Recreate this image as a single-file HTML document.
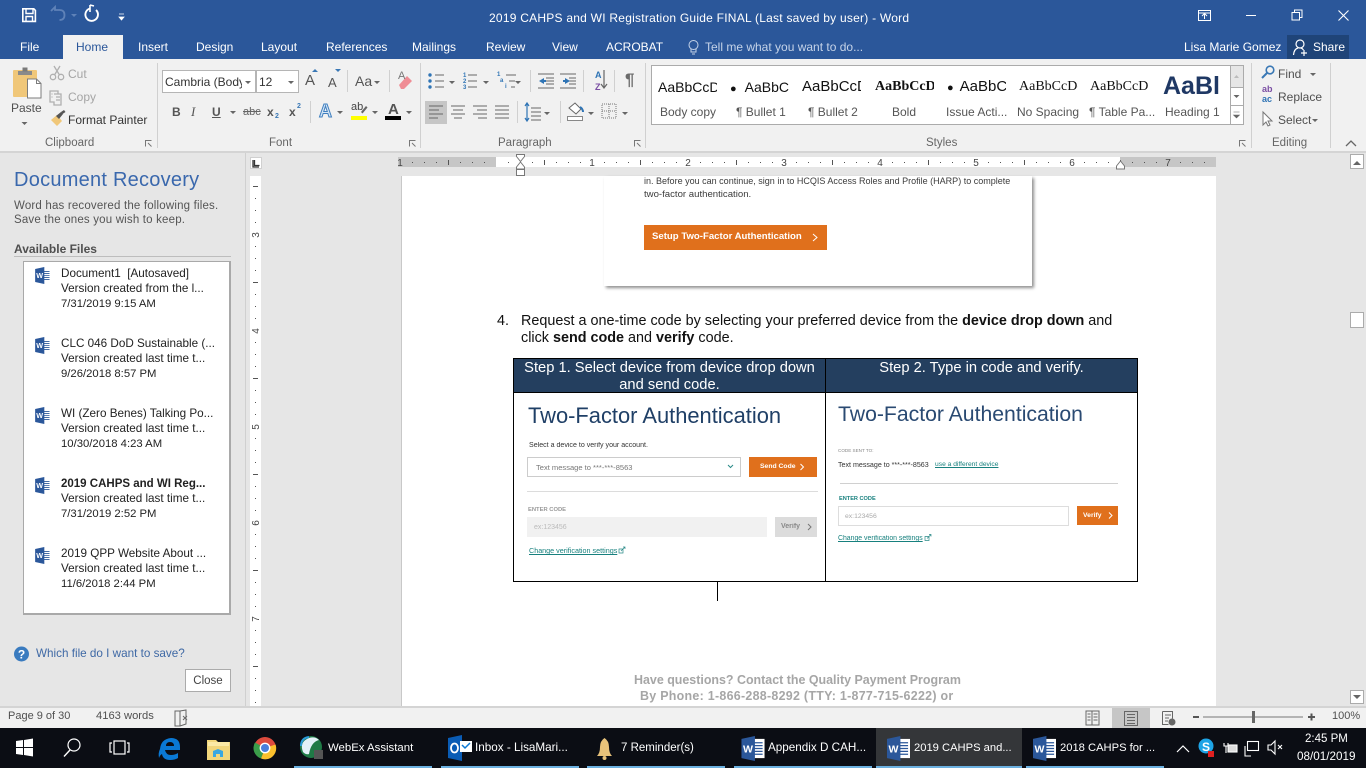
<!DOCTYPE html>
<html lang="en"><head><meta charset="utf-8"><title>Word</title>
<style>
html,body{margin:0;padding:0;width:1366px;height:768px;overflow:hidden;background:#e6e6e6}
body{position:relative;font-family:"Liberation Sans",sans-serif;font-size:12px;color:#444}
.b{position:absolute}
.t{position:absolute;white-space:nowrap;line-height:16px}
.w{color:#fff}
.g{color:#505050}
.s{position:absolute;overflow:hidden;white-space:nowrap;line-height:24px;color:#111;top:75px;height:24px;font-size:14px;text-align:left}
.l{position:absolute;white-space:nowrap;line-height:16px;top:104px;font-size:12px;color:#555;text-align:center}
.f{font-size:11.7px;color:#222;left:61px}
.d{font-size:11.3px}
.k{font-size:11.6px}
.i{position:absolute;white-space:nowrap;line-height:12px}
svg.o{position:absolute;left:0;top:0;pointer-events:none}
.blur{filter:blur(.3px)}
</style></head><body>
<!-- title bar -->
<div class="b" style="left:0;top:0;width:1366px;height:59px;background:#2b579a"></div>
<div class="b" style="left:63px;top:35px;width:60px;height:24px;background:#f1f1f1"></div>
<div class="b" style="left:1287px;top:35px;width:62px;height:24px;background:#1f4478"></div>
<div class="t w" style="left:489px;top:10px;letter-spacing:.02em">2019 CAHPS and WI Registration Guide FINAL (Last saved by user) - Word</div>
<div class="t w" style="left:20px;top:39px">File</div>
<div class="t" style="left:76px;top:39px;color:#2b579a">Home</div>
<div class="t w" style="left:138px;top:39px">Insert</div>
<div class="t w" style="left:196px;top:39px">Design</div>
<div class="t w" style="left:261px;top:39px">Layout</div>
<div class="t w" style="left:326px;top:39px">References</div>
<div class="t w" style="left:412px;top:39px">Mailings</div>
<div class="t w" style="left:486px;top:39px">Review</div>
<div class="t w" style="left:552px;top:39px">View</div>
<div class="t w" style="left:606px;top:39px">ACROBAT</div>
<div class="t" style="left:705px;top:39px;color:#c5d3e8">Tell me what you want to do...</div>
<div class="t w" style="left:1184px;top:39px">Lisa Marie Gomez</div>
<div class="t w" style="left:1313px;top:39px">Share</div>
<!-- ribbon -->
<div class="b" style="left:0;top:59px;width:1366px;height:92px;background:#f1f1f1;border-bottom:2px solid #d4d4d4"></div>
<div class="t g" style="left:11px;top:100px">Paste</div>
<div class="t" style="left:68px;top:66px;color:#a5a5a5">Cut</div>
<div class="t" style="left:68px;top:89px;color:#a5a5a5">Copy</div>
<div class="t" style="left:68px;top:112px;color:#333">Format Painter</div>
<div class="t" style="left:45px;top:135px;color:#666;font-size:11.5px">Clipboard</div>
<div class="t" style="left:269px;top:135px;color:#666;font-size:11.5px">Font</div>
<div class="t" style="left:498px;top:135px;color:#666;font-size:11.5px">Paragraph</div>
<div class="t" style="left:926px;top:135px;color:#666;font-size:11.5px">Styles</div>
<div class="t" style="left:1272px;top:135px;color:#666;font-size:11.5px">Editing</div>
<div class="b" style="left:162px;top:70px;width:92px;height:21px;background:#fff;border:1px solid #b5b5b5"></div>
<div class="b" style="left:256px;top:70px;width:41px;height:21px;background:#fff;border:1px solid #b5b5b5"></div>
<div class="b" style="left:165px;top:74px;width:77px;height:16px;overflow:hidden;white-space:nowrap;line-height:16px;color:#333">Cambria (Body)</div>
<div class="t" style="left:259px;top:74px;color:#333">12</div>
<div class="t" style="left:172px;top:104px;font-weight:bold;color:#555">B</div>
<div class="t" style="left:191px;top:104px;font-style:italic;font-family:'Liberation Serif',serif;font-size:13px;color:#555">I</div>
<div class="t" style="left:212px;top:104px;font-weight:bold;text-decoration:underline;color:#555">U</div>
<div class="t" style="left:243px;top:104px;color:#666;font-size:11px;text-decoration:line-through">abc</div>
<div class="t" style="left:267px;top:104px;font-weight:bold;color:#555">x</div>
<div class="t" style="left:275px;top:109px;font-size:7px;color:#3a78b5;font-weight:bold">2</div>
<div class="t" style="left:289px;top:104px;font-weight:bold;color:#555">x</div>
<div class="t" style="left:297px;top:99px;font-size:7px;color:#3a78b5;font-weight:bold">2</div>
<div class="t" style="left:305px;top:73px;font-size:15px;color:#555">A</div>
<div class="t" style="left:328px;top:75px;font-size:13px;color:#555">A</div>
<div class="t" style="left:355px;top:73px;font-size:14px;color:#555">Aa</div>
<div class="t" style="left:319px;top:103px;font-size:18px;font-weight:bold;color:#d5e5f5;-webkit-text-stroke:1px #3f7fbf">A</div>
<div class="t" style="left:351px;top:99px;font-size:11px;color:#444">ab</div>
<div class="t" style="left:388px;top:102px;font-size:15px;font-weight:bold;color:#555">A</div>
<div class="t" style="left:625px;top:72px;font-size:17px;font-weight:bold;color:#6b6b6b">¶</div>
<div class="t" style="left:595px;top:70px;font-size:9px;font-weight:bold;color:#2f74b5;line-height:11px">A</div>
<div class="t" style="left:595px;top:82px;font-size:9px;font-weight:bold;color:#7a4ea3;line-height:11px">Z</div>
<!-- gallery -->
<div class="b" style="left:651px;top:65px;width:591px;height:58px;background:#fff;border:1px solid #ababab"></div>
<div class="s" style="left:658px;width:59px">AaBbCcDc</div>
<div class="s" style="left:730px;width:60px"><span style="font-size:11px;margin-right:8px">●</span>AaBbC</div>
<div class="s" style="left:802px;width:59px;font-size:15px">AaBbCcDc</div>
<div class="s" style="left:875px;width:59px;font-family:'Liberation Serif',serif;font-weight:bold;font-size:14px">AaBbCcDc</div>
<div class="s" style="left:947px;width:59px;font-size:15px"><span style="font-size:11px;margin-right:6px">●</span>AaBbCc</div>
<div class="s" style="left:1019px;width:59px;font-family:'Liberation Serif',serif;font-size:14px">AaBbCcDc</div>
<div class="s" style="left:1090px;width:59px;font-family:'Liberation Serif',serif;font-size:14px">AaBbCcD</div>
<div class="s" style="left:1163px;width:57px;font-size:25px;font-weight:bold;color:#1f3864;top:72px;height:30px;line-height:28px">AaBl</div>
<div class="l" style="left:660px">Body copy</div>
<div class="l" style="left:736px">¶ Bullet 1</div>
<div class="l" style="left:808px">¶ Bullet 2</div>
<div class="l" style="left:892px">Bold</div>
<div class="l" style="left:946px">Issue Acti...</div>
<div class="l" style="left:1017px">No Spacing</div>
<div class="l" style="left:1089px">¶ Table Pa...</div>
<div class="l" style="left:1165px">Heading 1</div>
<div class="b" style="left:1230px;top:66px;width:13px;height:21px;background:#e6e6e6"></div>
<div class="b" style="left:1230px;top:87px;width:13px;height:1px;background:#ababab"></div>
<div class="b" style="left:1230px;top:105px;width:13px;height:1px;background:#ababab"></div>
<div class="b" style="left:1230px;top:66px;width:1px;height:58px;background:#ababab"></div>
<div class="t g" style="left:1278px;top:66px">Find</div>
<div class="t g" style="left:1278px;top:89px">Replace</div>
<div class="t g" style="left:1278px;top:112px">Select</div>
<div class="t" style="left:1262px;top:84px;font-size:9px;line-height:10px;color:#7a4ea3;font-weight:bold">ab</div>
<div class="t" style="left:1262px;top:94px;font-size:9px;line-height:10px;color:#2f74b5;font-weight:bold">ac</div>
<!-- left panel -->
<div class="b" style="left:0;top:153px;width:245px;height:553px;background:#e6e6e6;border-right:1px solid #d0d0d0"></div>
<div class="t" style="left:14px;top:169px;font-size:20px;line-height:22px;color:#3a68ad;letter-spacing:.25px">Document Recovery</div>
<div class="t" style="left:14px;top:198px;font-size:11.5px;color:#555;letter-spacing:.18px">Word has recovered the following files.</div>
<div class="t" style="left:14px;top:212px;font-size:11.5px;color:#555;letter-spacing:.18px">Save the ones you wish to keep.</div>
<div class="t" style="left:14px;top:241px;font-weight:bold;color:#4f4f4f;font-size:12px">Available Files</div>
<div class="b" style="left:14px;top:256px;width:217px;height:1px;background:#bdbdbd"></div>
<div class="b" style="left:23px;top:261px;width:205px;height:351px;background:#fff;border:2px solid #a9a9a9;border-width:1px 2px 2px 1px"></div>
<div class="t f" style="top:266px">Document1&nbsp; [Autosaved]</div>
<div class="t f" style="top:281px">Version created from the l...</div>
<div class="t f d" style="top:296px">7/31/2019 9:15 AM</div>
<div class="t f" style="top:336px">CLC 046 DoD Sustainable (...</div>
<div class="t f" style="top:351px">Version created last time t...</div>
<div class="t f d" style="top:366px">9/26/2018 8:57 PM</div>
<div class="t f" style="top:406px">WI (Zero Benes) Talking Po...</div>
<div class="t f" style="top:421px">Version created last time t...</div>
<div class="t f d" style="top:436px">10/30/2018 4:23 AM</div>
<div class="t f" style="top:476px;font-weight:bold;font-size:11.5px">2019 CAHPS and WI Reg...</div>
<div class="t f" style="top:491px">Version created last time t...</div>
<div class="t f d" style="top:506px">7/31/2019 2:52 PM</div>
<div class="t f" style="top:546px">2019 QPP Website About ... </div>
<div class="t f" style="top:561px">Version created last time t...</div>
<div class="t f d" style="top:576px">11/6/2018 2:44 PM</div>
<div class="t" style="left:36px;top:646px;color:#3f69a5;font-size:11.7px">Which file do I want to save?</div>
<div class="b" style="left:185px;top:669px;width:44px;height:21px;background:#fff;border:1px solid #ababab;text-align:center;line-height:22px;color:#444;font-size:11.5px">Close</div>
<!-- ruler bg -->
<div class="b" style="left:398px;top:157px;width:818px;height:10px;background:#fff"></div>
<div class="b" style="left:398px;top:157px;width:98px;height:10px;background:#c6c6c6"></div>
<div class="b" style="left:1120px;top:157px;width:96px;height:10px;background:#c6c6c6"></div>
<div class="b" style="left:250px;top:176px;width:11px;height:530px;background:#fff"></div>
<div class="b" style="left:250px;top:157px;width:12px;height:12px;background:#fff;border:1px solid #d0d0d0;box-sizing:border-box"></div>
<!-- page -->
<div class="b" style="left:401px;top:176px;width:815px;height:530px;background:#fff;border-left:1px solid #c8c8c8;box-sizing:border-box"></div>
<div class="b" style="left:604px;top:176px;width:428px;height:110px;background:#fff;box-shadow:2px 2px 3px #8f8f8f"></div>
<div class="i blur" style="left:644px;top:175px;font-size:9.03px;color:#3c3c3c">in. Before you can continue, sign in to HCQIS Access Roles and Profile (HARP) to complete</div>
<div class="i blur" style="left:644px;top:189px;font-size:9.6px;color:#3c3c3c">two-factor authentication.</div>
<div class="b" style="left:644px;top:225px;width:183px;height:25px;background:#e0701c"></div>
<div class="i blur" style="left:652px;top:231px;font-size:9.6px;font-weight:bold;color:#fff">Setup Two-Factor Authentication</div>
<div class="t" style="left:497px;top:313px;font-size:14.39px;color:#111">4.</div>
<div class="t" style="left:521px;top:313px;font-size:14.39px;color:#111">Request a one-time code by selecting your preferred device from the <b>device drop down</b> and</div>
<div class="t" style="left:521px;top:330px;font-size:14.39px;color:#111">click <b>send code</b> and <b>verify</b> code.</div>
<!-- table -->
<div class="b" style="left:513px;top:358px;width:625px;height:224px;background:#fff;border:1px solid #000;box-sizing:border-box"></div>
<div class="b" style="left:514px;top:359px;width:623px;height:33px;background:#243f5f"></div>
<div class="b" style="left:513px;top:392px;width:625px;height:1px;background:#000"></div>
<div class="b" style="left:825px;top:358px;width:1px;height:224px;background:#000"></div>
<div class="b" style="left:717px;top:582px;width:1px;height:19px;background:#000"></div>
<div class="t" style="left:514px;width:311px;text-align:center;top:360px;font-size:14.7px;color:#fff">Step 1. Select device from device drop down</div>
<div class="t" style="left:514px;width:311px;text-align:center;top:377px;font-size:14.7px;color:#fff">and send code.</div>
<div class="t" style="left:826px;width:311px;text-align:center;top:360px;font-size:14.7px;color:#fff">Step 2. Type in code and verify.</div>
<!-- left screenshot -->
<div class="i blur" style="left:528px;top:403px;font-size:21.9px;line-height:26px;color:#1f3f66">Two-Factor Authentication</div>
<div class="i blur" style="left:529px;top:440px;font-size:7.07px;color:#333">Select a device to verify your account.</div>
<div class="b" style="left:527px;top:457px;width:212px;height:18px;background:#fff;border:1px solid #ccc"></div>
<div class="i blur" style="left:536px;top:462px;font-size:7.55px;color:#777">Text message to ***-***-8563</div>
<div class="b" style="left:749px;top:457px;width:68px;height:20px;background:#e0701c"></div>
<div class="i blur" style="left:760px;top:461px;font-size:6.8px;font-weight:bold;color:#fff">Send Code</div>
<div class="b" style="left:527px;top:491px;width:291px;height:1px;background:#dcdcdc"></div>
<div class="i blur" style="left:528px;top:504px;font-size:5.8px;font-weight:bold;color:#999">ENTER CODE</div>
<div class="b" style="left:527px;top:517px;width:240px;height:20px;background:#f1f1f1"></div>
<div class="i blur" style="left:534px;top:522px;font-size:7px;color:#bbb">ex:123456</div>
<div class="b" style="left:775px;top:517px;width:42px;height:20px;background:#dcdcdc"></div>
<div class="i blur" style="left:781px;top:521px;font-size:7px;font-weight:bold;color:#888">Verify</div>
<div class="i blur" style="left:529px;top:545px;font-size:7.2px;color:#17807e;text-decoration:underline">Change verification settings</div>
<!-- right screenshot -->
<div class="i blur" style="left:838px;top:402px;font-size:21.2px;line-height:26px;color:#2a4a72">Two-Factor Authentication</div>
<div class="i blur" style="left:838px;top:445px;font-size:4.6px;color:#888">CODE SENT TO:</div>
<div class="i blur" style="left:838px;top:459px;font-size:7.1px;color:#333">Text message to ***-***-8563</div>
<div class="i blur" style="left:935px;top:459px;font-size:6.7px;color:#17807e;text-decoration:underline">use a different device</div>
<div class="b" style="left:840px;top:483px;width:278px;height:1px;background:#d0d0d0"></div>
<div class="i blur" style="left:839px;top:493px;font-size:5.6px;font-weight:bold;color:#17807e">ENTER CODE</div>
<div class="b" style="left:838px;top:506px;width:229px;height:18px;background:#fff;border:1px solid #ddd"></div>
<div class="i blur" style="left:845px;top:511px;font-size:6.8px;color:#aaa">ex:123456</div>
<div class="b" style="left:1077px;top:506px;width:41px;height:19px;background:#e0701c"></div>
<div class="i blur" style="left:1083px;top:510px;font-size:6.8px;font-weight:bold;color:#fff">Verify</div>
<div class="i blur" style="left:838px;top:533px;font-size:6.9px;color:#17807e;text-decoration:underline">Change verification settings</div>
<div class="t" style="left:634px;top:672px;font-size:12.45px;font-weight:bold;color:#a6a6a6">Have questions? Contact the Quality Payment Program</div>
<div class="t" style="left:640px;top:688px;font-size:12.45px;font-weight:bold;color:#a6a6a6;letter-spacing:.28px">By Phone: 1-866-288-8292 (TTY: 1-877-715-6222) or</div>
<!-- scrollbar -->
<div class="b" style="left:1350px;top:153px;width:16px;height:553px;background:#e6e6e6"></div>
<div class="b" style="left:1350px;top:154px;width:14px;height:15px;background:#fff;border:1px solid #ababab;box-sizing:border-box"></div>
<div class="b" style="left:1350px;top:312px;width:14px;height:16px;background:#fff;border:1px solid #ababab;box-sizing:border-box"></div>
<div class="b" style="left:1350px;top:690px;width:14px;height:14px;background:#fff;border:1px solid #ababab;box-sizing:border-box"></div>
<!-- status -->
<div class="b" style="left:0;top:706px;width:1366px;height:22px;background:#f1f1f1;border-top:2px solid #d4d4d4;box-sizing:border-box"></div>
<div class="b" style="left:1112px;top:708px;width:38px;height:20px;background:#c6c6c6"></div>
<div class="t g" style="left:8px;top:708px;font-size:11px">Page 9 of 30</div>
<div class="t g" style="left:96px;top:708px;font-size:11.2px">4163 words</div>
<div class="t g" style="left:1332px;top:708px;font-size:11px">100%</div>
<!-- taskbar -->
<div class="b" style="left:0;top:728px;width:1366px;height:40px;background:#0b0d14"></div>
<div class="b" style="left:876px;top:728px;width:146px;height:40px;background:#343639"></div>
<div class="b" style="left:294px;top:766px;width:138px;height:2px;background:#6bb0e0"></div>
<div class="b" style="left:441px;top:766px;width:138px;height:2px;background:#6bb0e0"></div>
<div class="b" style="left:587px;top:766px;width:138px;height:2px;background:#6bb0e0"></div>
<div class="b" style="left:734px;top:766px;width:138px;height:2px;background:#6bb0e0"></div>
<div class="b" style="left:876px;top:766px;width:146px;height:2px;background:#6bb0e0"></div>
<div class="b" style="left:1026px;top:766px;width:138px;height:2px;background:#6bb0e0"></div>
<div class="t w k" style="left:328px;top:740px;font-size:11.4px">WebEx Assistant</div>
<div class="t w k" style="left:475px;top:740px;font-size:11.7px">Inbox - LisaMari...</div>
<div class="t w k" style="left:621px;top:740px;font-size:11.5px">7 Reminder(s)</div>
<div class="t w k" style="left:768px;top:740px;font-size:11.7px">Appendix D CAH...</div>
<div class="t w k" style="left:914px;top:740px;font-size:11.2px">2019 CAHPS and...</div>
<div class="t w k" style="left:1060px;top:740px;font-size:11.2px">2018 CAHPS for ...</div>
<div class="t w" style="left:1305px;top:731px;font-size:11.5px">2:45 PM</div>
<div class="t w" style="left:1297px;top:749px;font-size:11.7px">08/01/2019</div>

<svg class="o" width="1366" height="768" viewBox="0 0 1366 768" xmlns="http://www.w3.org/2000/svg" font-family="Liberation Sans, sans-serif">
<defs>
<pattern id="hr" x="496" y="157" width="96" height="10" patternUnits="userSpaceOnUse">
<g fill="#555"><rect x="12" y="5" width="1" height="1"/><rect x="24" y="5" width="1" height="1"/><rect x="36" y="5" width="1" height="1"/><rect x="48" y="3" width="1" height="5"/><rect x="60" y="5" width="1" height="1"/><rect x="72" y="5" width="1" height="1"/><rect x="84" y="5" width="1" height="1"/></g>
</pattern>
<pattern id="vr" x="250" y="138" width="11" height="96" patternUnits="userSpaceOnUse">
<g fill="#555"><rect x="5" y="12" width="1" height="1"/><rect x="5" y="24" width="1" height="1"/><rect x="5" y="36" width="1" height="1"/><rect x="3" y="48" width="5" height="1"/><rect x="5" y="60" width="1" height="1"/><rect x="5" y="72" width="1" height="1"/><rect x="5" y="84" width="1" height="1"/></g>
</pattern>
<symbol id="word" viewBox="0 0 24 26" overflow="visible">
<rect x="9" y="3" width="15" height="20" fill="#fff"/>
<g stroke="#2b579a" stroke-width="1.3"><path d="M13 7h9M13 10h9M13 13h9M13 16h9M13 19h9"/></g>
<path d="M0 3 14 0v26L0 23z" fill="#2b579a"/>
<text x="6.8" y="17" font-size="11" font-weight="bold" fill="#fff" text-anchor="middle" font-family="Liberation Sans, sans-serif">W</text>
</symbol>
</defs>
<!-- QAT -->
<g fill="none" stroke="#fff" stroke-width="1.6"><path d="M22.8 8.8h11l1.6 1.6v11H22.8z"/><path d="M26 9v4.5h7V9M26 21.5v-5h6.5v5" stroke-width="1.4"/></g>
<path d="M51 11l4-4v3h4.500q5 0 5 5t-5 5" fill="none" stroke="#5f82b8" stroke-width="1.8"/>
<path d="M71 14l3 3 3-3z" fill="#5f82b8"/>
<path d="M96 10a6.300 6.300 0 1 1-6-1.500" fill="none" stroke="#fff" stroke-width="1.900"/><path d="M90 5v7M90 5l4 1" fill="none" stroke="#fff" stroke-width="1.600"/>
<path d="M119 14h5M119 17l2.500 3 2.500-3z" fill="#fff" stroke="#fff" stroke-width=".8"/>
<!-- window -->
<g fill="none" stroke="#fff" stroke-width="1"><rect x="1198.500" y="10.500" width="12" height="10"/><path d="M1198.500 13h12M1204.500 19v-5M1202 16l2.500-2.500 2.500 2.500"/><path d="M1246 15.500h10"/><rect x="1292" y="12.500" width="7.500" height="7.500"/><path d="M1294.500 12.500v-2.500h7.500v7.500h-2.500"/><path d="M1338.500 10.500l10 10M1348.500 10.500l-10 10" stroke-width="1.100"/></g>
<!-- lightbulb, share -->
<g fill="none" stroke="#c5d3e8" stroke-width="1"><circle cx="693.500" cy="45" r="4.500"/><path d="M691 49v3h5v-3M692 54h3"/></g>
<g fill="none" stroke="#fff" stroke-width="1.200"><circle cx="1300" cy="44" r="4"/><path d="M1293.500 55q.5-6 4.500-7M1301 48q1.500.5 2.500 2"/><path d="M1304 50v6M1301 53h6"/></g>
<!-- clipboard -->
<rect x="13" y="70" width="24" height="27" rx="1" fill="#f0c779"/><path d="M18 71h14v4H18z" fill="#8a8a8a"/><rect x="22.500" y="67.500" width="5" height="4" fill="#7a7a7a"/>
<path d="M27.500 79h9l4.500 4.500v14.500h-13.500z" fill="#fff" stroke="#7c7c7c"/><path d="M36.500 79v4.500h4.500" fill="none" stroke="#7c7c7c"/>
<path d="M21.500 122h6l-3 3z" fill="#666"/>
<!-- scissors, copy, painter -->
<g fill="none" stroke="#b0b0b0" stroke-width="1.300"><circle cx="53" cy="77" r="2.700"/><circle cx="61" cy="77" r="2.700"/><path d="M54.500 75 60 66M59.500 75 54 66"/><path d="M50 91h8v3h3v11h-7v-3h-4zM54 94h7M51.500 94h1M51.500 97h1M56 97h4M56 100h4"/></g>
<path d="M51 120l6-5 5 6-5 5z" fill="#f0c779"/><path d="M56 116l5-4 2 2-4 5z" fill="#555"/><path d="M61 112l3-2 1.500 2-3 2z" fill="#555"/>
<!-- separators -->
<g fill="#d0d0d0"><rect x="157" y="63" width="1" height="85"/><rect x="420" y="63" width="1" height="85"/><rect x="645" y="63" width="1" height="85"/><rect x="1251" y="63" width="1" height="85"/><rect x="1330" y="63" width="1" height="85"/>
<rect x="347" y="70" width="1" height="22"/><rect x="389" y="70" width="1" height="22"/><rect x="310" y="101" width="1" height="22"/><rect x="530" y="70" width="1" height="22"/><rect x="583" y="70" width="1" height="22"/><rect x="614" y="70" width="1" height="22"/><rect x="517" y="101" width="1" height="22"/><rect x="560" y="101" width="1" height="22"/></g>
<!-- launchers -->
<g fill="none" stroke="#777" stroke-width="1"><path d="M145.500 146.500v-6h6M148 143l3.500 3.500M409.500 146.500v-6h6M412 143l3.500 3.500M634.500 146.500v-6h6M637 143l3.500 3.500M1239.500 146.500v-6h6M1242 143l3.500 3.500"/></g>
<path d="M1346 146l5-5 5 5" fill="none" stroke="#666" stroke-width="1.300"/>
<!-- carets -->
<g fill="#666"><path d="M245 81h6l-3 3zM288 81h6l-3 3zM374 81h6l-3 3zM230 111h6l-3 3zM337 111h6l-3 3zM372 111h6l-3 3zM406 111h6l-3 3zM449 81h6l-3 3zM483 81h6l-3 3zM515 81h6l-3 3zM544 112h6l-3 3zM588 112h6l-3 3zM622 112h6l-3 3zM1310 73h6l-3 3zM1312 119h6l-3 3z"/></g>
<!-- grow/shrink arrows -->
<path d="M312 72l3-3 3 3z" fill="#3a78b5"/><path d="M335 69h6l-3 3z" fill="#3a78b5"/>
<!-- eraser -->
<path d="M399 85l8-9 5 5-8 8h-3z" fill="#ef8d95"/><text x="398" y="79" font-size="11" fill="#777" font-family="Liberation Sans, sans-serif">A</text>
<rect x="351" y="116" width="16" height="4" fill="#ff0"/><path d="M361 112l5-6 1.500 1.500-5 6z" fill="#666"/>
<rect x="385" y="116" width="16" height="4" fill="#000"/>
<!-- bullets -->
<g fill="#2f74b5"><circle cx="430" cy="75" r="1.700"/><circle cx="430" cy="81" r="1.700"/><circle cx="430" cy="87" r="1.700"/></g>
<path d="M435 75h9M435 81h9M435 87h9M468 75h9M468 81h9M468 87h9M506 75h10M509 81h6M511 87h4" stroke="#666" stroke-width="1" fill="none"/>
<g font-size="6" font-weight="bold" fill="#2f74b5" font-family="Liberation Sans, sans-serif"><text x="463" y="77">1</text><text x="463" y="83">2</text><text x="463" y="89">3</text><text x="497" y="76">1</text><text x="500" y="82">a</text><text x="505" y="88">i</text></g>
<!-- indent -->
<g stroke="#666" fill="none"><path d="M538 74h16M546 78h8M546 81h8M546 84h8M538 88h16M560 74h16M569 78h7M569 81h7M569 84h7M560 88h16"/></g>
<path d="M544 78v6l-5-3zM565 78v6l5-3z" fill="#2f74b5"/><path d="M544 81h2M563 81h3" stroke="#2f74b5" stroke-width="2"/>
<path d="M604 70v17M601 84l3 4 3-4" fill="none" stroke="#666" stroke-width="1.200"/>
<!-- align -->
<rect x="425" y="101" width="22" height="23" fill="#c6c6c6"/>
<g stroke="#666" stroke-width="1" fill="none"><path d="M429 106h14M429 110h10M429 114h14M429 118h9M451 106h14M453 110h10M451 114h14M454 118h8M473 106h14M477 110h10M473 114h14M478 118h9M495 106h14M495 110h14M495 114h14M495 118h14"/><path d="M531 108h10M531 112h10M531 116h10M531 120h10"/></g>
<path d="M527 103v18M525 106l2-3 2 3M525 118l2 3 2-3" fill="none" stroke="#2f74b5" stroke-width="1.200"/>
<!-- shading & borders -->
<path d="M569 108l6-5 6 6-5 5z" fill="#fff" stroke="#666"/><path d="M580 107q3 2 3 5" stroke="#2f74b5" stroke-width="2" fill="none"/><rect x="567.500" y="116.500" width="15" height="4" fill="#fff" stroke="#888"/>
<rect x="602" y="104" width="14" height="14" fill="none" stroke="#777" stroke-dasharray="1 1"/><path d="M609 104v14M602 111h14" stroke="#777" stroke-dasharray="1 1"/>
<!-- gallery scroll -->
<path d="M1234 78l2.500-3 2.500 3z" fill="#bbb"/><path d="M1233.500 95h6l-3 3z" fill="#666"/><path d="M1233.500 112h6M1233.500 115h6l-3 3z" fill="#666" stroke="#666" stroke-width=".6"/>
<!-- find/select -->
<circle cx="1270" cy="70" r="3.800" fill="none" stroke="#3a78b5" stroke-width="1.600"/><path d="M1267 73l-5 5" stroke="#3a78b5" stroke-width="2"/>
<path d="M1263 112v13l3-3 2 4 2-1-2-4h4z" fill="#fff" stroke="#777"/>
<!-- help -->
<circle cx="21.500" cy="654" r="7.500" fill="#3a7bbf"/><text x="21.500" y="658.500" font-size="12" font-weight="bold" fill="#fff" text-anchor="middle" font-family="Liberation Sans, sans-serif">?</text>
<!-- rulers -->
<rect x="398" y="157" width="818" height="10" fill="url(#hr)"/>
<rect x="250" y="176" width="11" height="530" fill="url(#vr)"/>
<g font-size="10" fill="#444" text-anchor="middle" font-family="Liberation Sans, sans-serif"><text x="400" y="166">1</text><text x="592" y="166">1</text><text x="688" y="166">2</text><text x="784" y="166">3</text><text x="880" y="166">4</text><text x="976" y="166">5</text><text x="1072" y="166">6</text><text x="1168" y="166">7</text>
<text transform="translate(259 235) rotate(-90)">3</text><text transform="translate(259 331) rotate(-90)">4</text><text transform="translate(259 427) rotate(-90)">5</text><text transform="translate(259 523) rotate(-90)">6</text><text transform="translate(259 619) rotate(-90)">7</text></g>
<path d="M253 160v7h6M254.500 160v5.500h5" fill="none" stroke="#333" stroke-width="1.300"/>
<g fill="#fff" stroke="#777"><path d="M516.500 154.500h8v2l-4 5-4-5z"/><path d="M520.500 162l4 5v2h-8v-2z"/><rect x="516.500" y="169.500" width="8" height="6"/><path d="M1120.500 161l4 5v3h-8v-3z"/></g>
<!-- word icons in panel -->
<use href="#word" x="35" y="267" width="16" height="17"/><use href="#word" x="35" y="337" width="16" height="17"/><use href="#word" x="35" y="407" width="16" height="17"/><use href="#word" x="35" y="477" width="16" height="17"/><use href="#word" x="35" y="547" width="16" height="17"/>
<!-- chevrons in shots -->
<g fill="none" stroke-width="1"><path d="M813 234l4 3.500-4 3.500M800.500 464l3 3-3 3M1109 512.500l3 3-3 3" stroke="#fff"/><path d="M808 524l3 3-3 3" stroke="#777"/><path d="M728 465l2.500 2.500 2.500-2.500" stroke="#2a8a88"/></g>
<path d="M619 549h4v4h-4zM621 551l4-4M623 547h2v2M925 536.500h4v4h-4zM927 538.500l4-4M929 534.500h2v2" fill="none" stroke="#2a8a88" stroke-width=".7"/>
<!-- scrollbar arrows -->
<path d="M1353 165l4-4 4 4z" fill="#666"/><path d="M1353 695h8l-4 4z" fill="#666"/>
<!-- status icons -->
<g fill="none" stroke="#666"><path d="M175 711h5v15h-5zM180 711l6-1v14l-6 2M183 716l4 4M187 716l-4 4"/>
<path d="M1086 711h6v14h-6zM1092 711h7v14h-7zM1087.500 714h3M1087.500 717h3M1087.500 720h3M1093.500 714h4M1093.500 717h4M1093.500 720h4"/>
<rect x="1124.500" y="711.500" width="13" height="14"/><path d="M1127 714.500h8M1127 717.500h8M1127 720.500h8M1127 723.500h8"/>
<path d="M1162.500 711.500h10v7M1162.500 711.500v13h6M1165 715h6M1165 718h4M1165 721h3"/></g><circle cx="1172" cy="722" r="3.500" fill="#666"/>
<path d="M1193 717h6M1308 717h7M1311.500 713.500v7" stroke="#555" stroke-width="2"/><rect x="1203" y="716.500" width="100" height="1" fill="#777"/><rect x="1252" y="711" width="3" height="12" fill="#666"/>
<!-- taskbar -->
<path d="M16 741l7-1v7h-7zM24 740l9-1.500v8.500h-9zM16 748h7v7l-7-1zM24 748h9v8.500l-9-1.500z" fill="#fff"/>
<circle cx="74" cy="745" r="6" fill="none" stroke="#fff" stroke-width="1.200"/><path d="M70 750l-6 6.500" stroke="#fff" stroke-width="1.400"/>
<g fill="none" stroke="#fff" stroke-width="1.200"><rect x="114" y="741" width="11" height="13"/><path d="M112 743h-2v9h2M127 743h2v9h-2"/></g>
<path d="M160 749q1-10 11-11 9 0 9 9v3h-15q1 5 6 5 4 0 7-2v5q-3 2-8 2-7 0-8-6-2 1-3 4-1-5 1-9zm6-3h8q0-4-4-4t-4 4z" fill="#0a78d4"/>
<path d="M207 740h9l2 2h12v18h-23z" fill="#f2d67b"/><path d="M208 742h21v4h-21z" fill="#fbe9a6"/><path d="M213 757v-6l5-2 5 2v6h-3v-3h-4v3z" fill="#3aa7e0"/>
<circle cx="265" cy="748" r="11" fill="#dd4b3e"/><path d="M265 748 275.500 744.500a11 11 0 0 1-14.500 14z" fill="#fbc02d"/><path d="M265 748 261 758.500a11 11 0 0 1-6-16z" fill="#3b9d4a"/><circle cx="265" cy="748" r="5.400" fill="#fff"/><circle cx="265" cy="748" r="4" fill="#4a7fdc"/>
<circle cx="311" cy="747" r="11" fill="#1f7a46"/><path d="M303 752q-4-10 6-14 6-2 10 2-8 2-10 14-3 1-6-2z" fill="#e3f1f8"/><path d="M301 746q0-8 8-9" fill="none" stroke="#2a9bd8" stroke-width="2"/><rect x="314" y="750" width="9" height="9" fill="#555"/>
<path d="M448 738l14-3v26l-14-3z" fill="#0a5cb5"/><rect x="460" y="741" width="12" height="11" fill="#fff"/><path d="M462 745l3 3 5-5" stroke="#0a78d4" stroke-width="1.500" fill="none"/><ellipse cx="454.500" cy="748" rx="3.500" ry="4.500" fill="none" stroke="#fff" stroke-width="1.800"/>
<path d="M597 756q3-3 3-9t4.500-9q4.500 3 4.500 9t3 9z" fill="#e8c27a"/><circle cx="604.500" cy="758" r="2" fill="#e8c27a"/>
<use href="#word" x="741" y="736" width="24" height="25"/><use href="#word" x="887" y="736" width="23" height="25"/><use href="#word" x="1033" y="736" width="23" height="25"/>
<path d="M1177 752l6-6 6 6" fill="none" stroke="#fff" stroke-width="1.200"/>
<circle cx="1206" cy="746" r="7.500" fill="#1ea4e6"/><text x="1206" y="751" font-size="12" font-weight="bold" fill="#fff" text-anchor="middle" font-family="Liberation Sans, sans-serif">S</text><rect x="1208" y="751" width="6" height="6" fill="#e02020"/>
<g fill="none" stroke="#fff" stroke-width="1.100"><path d="M1224 743v3h4v-3M1226 746v7"/><rect x="1228" y="745" width="9" height="7" fill="#ddd"/>
<rect x="1247.500" y="741.500" width="11" height="9"/><path d="M1245 746v10h6"/><path d="M1268 745h3l4-4v13l-4-4h-3z"/><path d="M1278 745l4 4M1282 745l-4 4"/></g>
</svg>
</body></html>
